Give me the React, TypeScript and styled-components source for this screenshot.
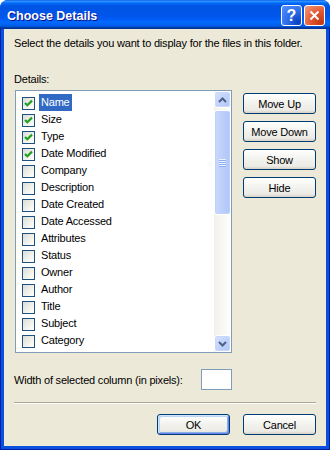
import styled, { createGlobalStyle } from "styled-components";

const GlobalStyle = createGlobalStyle`
  html, body {
    margin: 0;
    padding: 0;
    background: #ffffff;
  }
  body {
    font-family: "Liberation Sans", Arial, sans-serif;
    font-size: 11px;
    color: #000000;
  }
`;

const details = [
  { name: "Name", checked: true },
  { name: "Size", checked: true },
  { name: "Type", checked: true },
  { name: "Date Modified", checked: true },
  { name: "Company", checked: false },
  { name: "Description", checked: false },
  { name: "Date Created", checked: false },
  { name: "Date Accessed", checked: false },
  { name: "Attributes", checked: false },
  { name: "Status", checked: false },
  { name: "Owner", checked: false },
  { name: "Author", checked: false },
  { name: "Title", checked: false },
  { name: "Subject", checked: false },
  { name: "Category", checked: false },
];

const CheckMark = () => (
  <svg width="11" height="11" viewBox="0 0 11 11">
    <path d="M2 5 L4.3 7.3 L9 2.6" fill="none" stroke="#21a121" strokeWidth="2.2" />
  </svg>
);

const Chevron = ({ down }: { down?: boolean }) => (
  <svg width="9" height="6" viewBox="0 0 9 6">
    <path
      d={down ? "M1 1 L4.5 4.5 L8 1" : "M1 5 L4.5 1.5 L8 5"}
      fill="none"
      stroke="#4d6185"
      strokeWidth="2"
    />
  </svg>
);

const App = () => {
  return (
    <>
      <GlobalStyle />
      <Window>
        <TitleBar>
          <TitleText>Choose Details</TitleText>
          <CaptionButtons>
            <CaptionButton $kind="help">?</CaptionButton>
            <CaptionButton $kind="close">
              <svg width="11" height="11" viewBox="0 0 11 11">
                <path d="M1.5 1.5 L9.5 9.5 M9.5 1.5 L1.5 9.5" stroke="#ffffff" strokeWidth="2" />
              </svg>
            </CaptionButton>
          </CaptionButtons>
        </TitleBar>
        <Frame>
          <Content>
            <Line>Select the details you want to display for the files in this folder.</Line>
            <DetailsLabel>Details:</DetailsLabel>
            <MainRow>
              <ListBox>
                <Rows>
                  {details.map((d, i) => (
                    <Row key={d.name}>
                      <CheckBox>{d.checked && <CheckMark />}</CheckBox>
                      <ItemLabel $selected={i === 0}>{d.name}</ItemLabel>
                    </Row>
                  ))}
                  {/* next row peeks in under the fold */}
                  <Row>
                    <CheckBox />
                  </Row>
                </Rows>
                <ScrollBar>
                  <ScrollButton>
                    <Chevron />
                  </ScrollButton>
                  <Thumb>
                    <Grip />
                  </Thumb>
                  <Track />
                  <ScrollButton>
                    <Chevron down />
                  </ScrollButton>
                </ScrollBar>
              </ListBox>
              <ButtonColumn>
                <Button>Move Up</Button>
                <Button>Move Down</Button>
                <Button>Show</Button>
                <Button>Hide</Button>
              </ButtonColumn>
            </MainRow>
            <WidthRow>
              <WidthLabel>Width of selected column (in pixels):</WidthLabel>
              <WidthInput />
            </WidthRow>
            <Separator />
            <Footer>
              <Button $default>OK</Button>
              <Button>Cancel</Button>
            </Footer>
          </Content>
        </Frame>
      </Window>
    </>
  );
};

const Window = styled.div`
  width: 330px;
  height: 450px;
  display: flex;
  flex-direction: column;
  border-radius: 8px 8px 0 0;
  overflow: hidden;
  background: #0842d6;
`;

const TitleBar = styled.div`
  height: 29px;
  flex: none;
  display: flex;
  align-items: flex-start;
  padding: 0 5px 0 7px;
  box-sizing: border-box;
  background: linear-gradient(
    to bottom,
    #0058ee 0%,
    #3593ff 4%,
    #288eff 6%,
    #127dff 8%,
    #036ffc 10%,
    #0262ee 14%,
    #0057e5 20%,
    #0054e3 24%,
    #0055eb 56%,
    #005bf5 66%,
    #026afe 76%,
    #0062ef 86%,
    #0052d6 92%,
    #0040ab 94%,
    #003092 100%
  );
`;

const TitleText = styled.div`
  flex: 1;
  margin-top: 8px;
  color: #ffffff;
  font-weight: bold;
  font-size: 12.5px;
  line-height: 16px;
  text-shadow: 1px 1px #0f1089;
`;

const CaptionButtons = styled.div`
  display: flex;
  gap: 2px;
  margin-top: 5px;
`;

const CaptionButton = styled.div<{ $kind: "help" | "close" }>`
  width: 21px;
  height: 21px;
  box-sizing: border-box;
  border: 1px solid #ffffff;
  border-radius: 3px;
  display: flex;
  align-items: center;
  justify-content: center;
  color: #ffffff;
  font-weight: bold;
  font-size: 16px;
  background: ${(p) =>
    p.$kind === "help"
      ? "radial-gradient(circle at 85% 85%, #0a3fc4 0%, #2c6ae6 45%, #5893ff 100%)"
      : "radial-gradient(circle at 85% 85%, #c33a10 0%, #e0572f 45%, #f49d7f 100%)"};
`;

const Frame = styled.div`
  flex: 1;
  display: flex;
  padding: 0 4px 4px;
  background: #0a4fe0;
  box-shadow: inset 1px 0 #001ea0, inset -1px 0 #001ea0, inset 0 -1px #001ea0;
`;

const Content = styled.div`
  flex: 1;
  display: flex;
  flex-direction: column;
  background: #ece9d8;
  padding: 8px 10px 11px;
  letter-spacing: -0.2px;
`;

const Line = styled.div`
  line-height: 13px;
  white-space: nowrap;
`;

const DetailsLabel = styled(Line)`
  margin-top: 23px;
`;

const MainRow = styled.div`
  margin-top: 4px;
  padding-left: 1px;
  display: flex;
  align-items: flex-start;
  gap: 11px;
`;

const ListBox = styled.div`
  width: 217px;
  height: 263px;
  box-sizing: border-box;
  border: 1px solid #7f9db9;
  background: #ffffff;
  display: flex;
  overflow: hidden;
`;

const Rows = styled.div`
  flex: 1;
  padding-top: 3px;
  overflow: hidden;
`;

const Row = styled.div`
  height: 17px;
  display: flex;
  align-items: center;
  padding-left: 6px;
`;

const CheckBox = styled.div`
  width: 13px;
  height: 13px;
  flex: none;
  margin-top: 2px;
  box-sizing: border-box;
  border: 1px solid #1c5180;
  background: linear-gradient(135deg, #dcdcd7 0%, #f0f0ea 50%, #ffffff 100%);
  display: flex;
  align-items: center;
  justify-content: center;
  margin-right: 4px;
`;

const ItemLabel = styled.div<{ $selected?: boolean }>`
  height: 17px;
  line-height: 17px;
  padding: 0 2px;
  white-space: nowrap;
  background: ${(p) => (p.$selected ? "#316ac5" : "transparent")};
  color: ${(p) => (p.$selected ? "#ffffff" : "#000000")};
`;

const ScrollBar = styled.div`
  width: 17px;
  flex: none;
  display: flex;
  flex-direction: column;
  background: linear-gradient(to right, #f3f1ec, #fefefb);
`;

const ScrollButton = styled.div`
  height: 17px;
  flex: none;
  box-sizing: border-box;
  border: 1px solid #ffffff;
  border-radius: 3px;
  background: linear-gradient(135deg, #d8e3fd 0%, #c1d3fb 50%, #b1c7f7 100%);
  box-shadow: inset 0 0 0 1px #c9d8fb;
  display: flex;
  align-items: center;
  justify-content: center;
`;

const Thumb = styled.div`
  height: 105px;
  margin-top: 2px;
  flex: none;
  box-sizing: border-box;
  border: 1px solid #ffffff;
  border-radius: 3px;
  background: linear-gradient(to right, #cad9fc 0%, #bccffa 50%, #b0c6f8 100%);
  box-shadow: inset 0 0 0 1px #bfd1fa;
  display: flex;
  align-items: center;
  justify-content: center;
`;

const Grip = styled.div`
  width: 7px;
  height: 8px;
  background: repeating-linear-gradient(
    to bottom,
    #eef4fe 0px,
    #eef4fe 1px,
    #8caef2 1px,
    #8caef2 2px
  );
`;

const Track = styled.div`
  flex: 1;
`;

const ButtonColumn = styled.div`
  display: flex;
  flex-direction: column;
  gap: 7px;
  margin-top: 3px;
`;

const Button = styled.div<{ $default?: boolean }>`
  width: 73px;
  height: 21px;
  box-sizing: border-box;
  border: 1px solid #003c74;
  border-radius: 3px;
  display: flex;
  align-items: center;
  justify-content: center;
  white-space: nowrap;
  background: linear-gradient(to bottom, #ffffff 0%, #f4f4f0 40%, #ecebe6 85%, #d6d0c5 100%);
  box-shadow: ${(p) =>
    p.$default
      ? "inset 1px 1px #cee7ff, inset -1px -1px #6982ee, inset 2px 2px #bcd4f6, inset -2px -2px #89ade4"
      : "none"};
`;

const WidthRow = styled.div`
  margin-top: 16px;
  display: flex;
  align-items: center;
`;

const WidthLabel = styled.div`
  width: 187px;
  flex: none;
  white-space: nowrap;
`;

const WidthInput = styled.div`
  width: 31px;
  height: 21px;
  box-sizing: border-box;
  border: 1px solid #7f9db9;
  background: #ffffff;
`;

const Separator = styled.div`
  margin-top: 12px;
  border-top: 1px solid #aca899;
  border-bottom: 1px solid #ffffff;
`;

const Footer = styled.div`
  margin-top: 10px;
  display: flex;
  justify-content: flex-end;
  gap: 13px;
`;

export default App;
